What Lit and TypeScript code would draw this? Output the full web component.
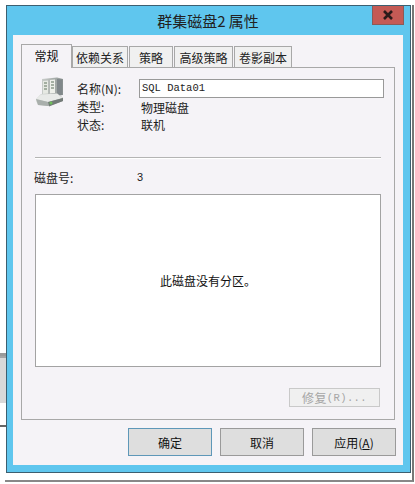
import { LitElement, html, css, svg } from "lit";
import { customElement } from "lit/decorators.js";

const icon = svg`<svg class="disk" width="30" height="30" viewBox="0 0 30 30">
  <defs>
    <linearGradient id="t" x1="0" x2="1" y1="0" y2="0"><stop offset="0" stop-color="#c8ccc9"/><stop offset="1" stop-color="#8f9694"/></linearGradient>
    <linearGradient id="d" x1="0" x2="1" y1="0" y2="0"><stop offset="0" stop-color="#dcdfdc"/><stop offset="1" stop-color="#8b918e"/></linearGradient>
  </defs>
  <path d="M7 2 L22 0.5 L28 2 L28 18 L7 20 Z" fill="url(#t)"/>
  <path d="M8 4 L13 3.5 V17 L8 18 Z" fill="#e6e9e3"/>
  <path d="M15 3 L20 2.5 V16 L15 17 Z" fill="#eef0ea"/>
  <path d="M9 6 h3 M9 9 h3 M9 12 h3 M16 5 h3 M16 8 h3 M16 11 h3" stroke="#8d9a8c" stroke-width="1.3"/>
  <path d="M22 2 L27.5 2.5 V18 L22 18.5 Z" fill="#80878a"/>
  <path d="M6 17 L22 16 L28 21 L28 24 L14 29 L3 28 L1 24 L1 22 Z" fill="url(#d)"/>
  <path d="M1 22 L13 25 L28 21 L22 16.5 L6 17.5 Z" fill="#e8eae8"/>
  <path d="M1 22 L13 25 V29 L3 28 Z" fill="#a9afac"/>
  <path d="M13 25 L28 21 V24 L14 29.5 Z" fill="#737b78"/>
  <circle cx="16" cy="26" r="1.5" fill="#6fc05a"/>
</svg>`;

@customElement("app-root")
export class AppRoot extends LitElement {
  static styles = css`
    :host {
      display: block; width: 415px; height: 484px; position: relative; overflow: hidden;
      background: #fff; box-sizing: border-box; padding: 5px 0 0 6px;
      font-family: "Noto Sans CJK SC", "Liberation Sans", sans-serif;
      font-size: 12px; color: #1c1c1c;
    }
    .behind { position: absolute; left: 0; width: 6px; }
    .b1 { top: 353px; height: 3px; background: #9a9a9a; }
    .b2 { top: 356px; height: 47px; background: #d9d9d9; border-top: 2px solid #a5a5a5; box-sizing: border-box; }
    .b3 { top: 425px; height: 2px; background: #666; }
    .shadow {
      position: absolute; left: 5px; top: 5px; width: 409px; height: 477px; box-sizing: border-box;
      border-right: 2px solid #777; border-bottom: 2px solid #888;
    }
    .window {
      position: relative; box-sizing: border-box; width: 405px; height: 468px;
      background: #5fc6ee; border: 1px solid #3d5f70;
      display: flex; flex-direction: column;
    }
    .title { height: 29px; flex: none; display: flex; position: relative; justify-content: center; align-items: center; padding-right: 1px; box-sizing: border-box; font-size: 15px; color: #222; }
    .close {
      position: absolute; right: 6px; top: 0; width: 32px; height: 19px; box-sizing: border-box;
      background: #c45a55; border: 1px solid #8a5a58; border-top: none;
      display: flex; align-items: center; justify-content: center;
    }
    .panel {
      flex: 1; margin: 0 7px 7px 6px; background: #f5f3f7;
      display: flex; flex-direction: column; padding: 9px 8px 10px 8px; box-sizing: border-box; min-height: 0;
    }
    .tabs { display: flex; height: 23px; flex: none; gap: 1px; align-items: flex-end; }
    .tab {
      box-sizing: border-box; height: 21px; display: flex; align-items: center; justify-content: center;
      background: #f0f0f0; border: 1px solid #a8a8a8; border-bottom: none; color: #222; font-size: 12px;
    }
    .tab.active { height: 24px; background: #f5f3f7; margin-bottom: -1px; position: relative; z-index: 1; margin-right: -1px; color: #111; padding-bottom: 3px; }
    .body {
      flex: none; height: 353px; box-sizing: border-box; background: #f5f3f7;
      border: 1px solid #a8a8a8; padding: 11px 13px 0 13px; display: flex; flex-direction: column;
    }
    .head { display: grid; grid-template-columns: 42px 62px 1fr; height: 78px; }
    .iconcell { margin-top: -2px; }
    .disk { filter: blur(0.4px); }
    .rows { display: flex; flex-direction: column; }
    .labels { gap: 1px; padding-top: 1px; }
    .lbl { line-height: 17px; }
    .val { line-height: 17px; padding-left: 2px; }
    .input {
      box-sizing: border-box; height: 19px; width: 245px; background: #fff; border: 1px solid #999;
      font-family: "Liberation Mono", monospace; font-size: 10.5px; line-height: 17px; padding-left: 2px; color: #222;
      margin-bottom: 1px;
    }
    .rule { height: 1px; background: #b4b4b4; border-bottom: 1px solid #fff; flex: none; }
    .num { display: flex; height: 35px; flex: none; align-items: center; margin-left: -1px; padding-top: 1px; box-sizing: border-box; }
    .num span:first-child { width: 103px; }
    .num span:last-child { font-family: "Liberation Sans", sans-serif; font-size: 11px; }
    .list {
      flex: none; height: 173px; box-sizing: border-box; background: #fff; border: 1px solid #a3a3a3;
      display: flex; align-items: center; justify-content: center; color: #111;
    }
    .repair-row { display: flex; justify-content: flex-end; margin-top: 21px; }
    .repair {
      box-sizing: border-box; width: 91px; height: 19px; margin-right: 1px; border: 1px solid #c9c9c9; background: #f0f0f0;
      color: #a6a6a6; display: flex; align-items: center; justify-content: center; letter-spacing: 0.4px;
    }
    .repair i { font-style: normal; font-family: "Liberation Mono", monospace; font-size: 10.5px; }
    .buttons { display: flex; justify-content: flex-end; gap: 8px; margin: 8px -1px 0 0; }
    .btn {
      box-sizing: border-box; width: 84px; height: 28px; background: #dedede; border: 1px solid #9a9a9a;
      display: flex; align-items: center; justify-content: center; color: #111;
    }
    .btn.def { border-color: #5e97b8; }
    u { text-underline-offset: 1px; }
  `;

  render() {
    const tabs: [string, number][] = [["依赖关系", 56], ["策略", 44], ["高级策略", 59], ["卷影副本", 58]];
    return html`
      <div class="behind b1"></div><div class="behind b2"></div><div class="behind b3"></div>
      <div class="shadow"></div>
      <div class="window">
        <div class="title">群集磁盘2 属性
          <div class="close"><svg width="12" height="10" viewBox="0 0 12 10"><path d="M2 1 L10 9 M10 1 L2 9" stroke="#2a1a1a" stroke-width="2.6"/></svg></div>
        </div>
        <div class="panel">
          <div class="tabs">
            <div class="tab active" style="width:51px">常规</div>
            ${tabs.map(([t, w]) => html`<div class="tab" style="width:${w}px">${t}</div>`)}
          </div>
          <div class="body">
            <div class="head">
              <div class="iconcell">${icon}</div>
              <div class="rows labels"><span class="lbl">名称(N):</span><span class="lbl">类型:</span><span class="lbl">状态:</span></div>
              <div class="rows"><div class="input">SQL Data01</div><span class="val">物理磁盘</span><span class="val">联机</span></div>
            </div>
            <div class="rule"></div>
            <div class="num"><span>磁盘号:</span><span>3</span></div>
            <div class="list">此磁盘没有分区。</div>
            <div class="repair-row"><div class="repair">修复<i>(R)...</i></div></div>
          </div>
          <div class="buttons">
            <div class="btn def">确定</div>
            <div class="btn">取消</div>
            <div class="btn">应用(<u>A</u>)</div>
          </div>
        </div>
      </div>
    `;
  }
}
